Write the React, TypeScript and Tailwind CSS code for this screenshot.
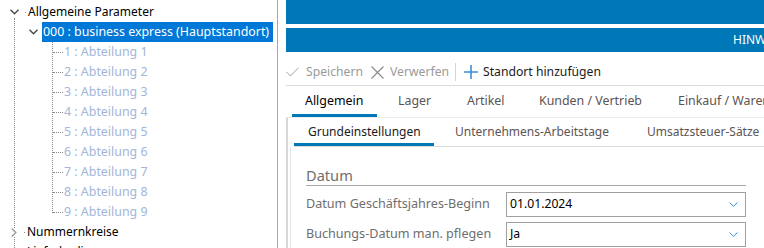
import React from "react";

const font = { fontFamily: '"Noto Sans", "Open Sans", sans-serif' };

const children = [1, 2, 3, 4, 5, 6, 7, 8, 9];

function ChevronDown({ className }: { className?: string }) {
  return (
    <svg width="9" height="6" viewBox="0 0 9 6" className={className}>
      <path d="M0.5 0.8 L4.5 4.8 L8.5 0.8" fill="none" stroke="currentColor" strokeWidth="1.4" />
    </svg>
  );
}

function ChevronRight({ className }: { className?: string }) {
  return (
    <svg width="6" height="9" viewBox="0 0 6 9" className={className}>
      <path d="M0.8 0.5 L4.8 4.5 L0.8 8.5" fill="none" stroke="currentColor" strokeWidth="1.4" />
    </svg>
  );
}

function Tree() {
  return (
    <div className="relative w-[278px] shrink-0 h-full border-r border-[#a8a8a8] bg-white text-[12px] leading-none">
      {/* tree guides */}
      <div className="absolute left-[14px] top-[18px] bottom-0 border-l border-dotted border-[#8a8a8a]" />
      <div className="absolute left-[52px] top-[42px] h-[171px] border-l border-dotted border-[#8a8a8a]" />

      <div className="relative pt-[2px]">
        <div className="flex items-center h-[20px]">
          <span className="w-[10px]" />
          <ChevronDown className="text-[#4a4a4a] bg-white relative" />
          <span className="ml-[6px] w-[1px] h-[1px] bg-[#8a8a8a]" />
          <span className="ml-[2px] text-black">Allgemeine Parameter</span>
        </div>
        <div className="flex items-center h-[20px]">
          <span className="w-[29px]" />
          <ChevronDown className="text-[#4a4a4a]" />
          <span className="ml-[4px] h-[20px] flex items-center bg-[#0078d7] text-white pl-[1px] pr-[4px] text-[12.4px]">
            000 : business express (Hauptstandort)
          </span>
        </div>
        {children.map((n) => (
          <div key={n} className="flex items-center h-[20px]">
            <span className="ml-[53px] w-[10px] border-t border-dotted border-[#8a8a8a]" />
            <span className="ml-[1px] text-[#a3b5d9] text-[12.4px]">
              {n} : Abteilung {n}
            </span>
          </div>
        ))}
        <div className="flex items-center h-[20px]">
          <span className="w-[11px]" />
          <ChevronRight className="text-[#9a9a9a] bg-white relative" />
          <span className="ml-[7px] w-[1px] h-[1px] bg-[#8a8a8a]" />
          <span className="ml-[2px] text-black">Nummernkreise</span>
        </div>
        <div className="flex items-center h-[20px]">
          <span className="w-[11px]" />
          <ChevronRight className="text-[#9a9a9a] bg-white relative" />
          <span className="ml-[7px] w-[1px] h-[1px] bg-[#8a8a8a]" />
          <span className="ml-[2px] text-black">Lieferbedingungen</span>
        </div>
      </div>
    </div>
  );
}

function Toolbar() {
  return (
    <div className="h-[34px] shrink-0 pt-[7px] flex items-center border-b border-[#dcdcdc] text-[12.2px]">
      <svg width="13" height="10" viewBox="0 0 13 10" className="text-[#a0a0a0]">
        <path d="M0.5 5 L4.5 9 L12.5 0.8" fill="none" stroke="currentColor" strokeWidth="1" />
      </svg>
      <span className="ml-[7px] w-[58px] text-[#9a9a9a]">Speichern</span>
      <svg width="13" height="13" viewBox="0 0 13 13" className="ml-[7px] text-[#8a8a8a]">
        <path d="M0.5 0.5 L12.5 12.5 M12.5 0.5 L0.5 12.5" fill="none" stroke="currentColor" strokeWidth="1.1" />
      </svg>
      <span className="ml-[6px] w-[60px] text-[#9a9a9a]">Verwerfen</span>
      <span className="ml-[5px] w-[1px] h-[18px] bg-[#d4d4d4]" />
      <svg width="14" height="14" viewBox="0 0 14 14" className="ml-[8px] text-[#3b8fd4]">
        <path d="M7 0 V14 M0 7 H14" fill="none" stroke="currentColor" strokeWidth="1.6" />
      </svg>
      <span className="ml-[5px] text-[#1a1a1a]">Standort hinzufügen</span>
    </div>
  );
}

function Tabs() {
  return (
    <div className="flex h-[31px] shrink-0 ml-[6px] text-[12.4px] whitespace-nowrap">
      <div className="w-[85px] mr-[8px] pl-[13px] flex items-center border-b-[3px] border-[#0077b6] text-black pt-[3px]">
        Allgemein
      </div>
      <div className="w-[69px] pl-[13px] flex items-center text-[#5c5454]">Lager</div>
      <div className="w-[72px] pl-[13px] flex items-center text-[#5c5454]">Artikel</div>
      <div className="w-[139px] pl-[13px] flex items-center text-[#5c5454]">Kunden / Vertrieb</div>
      <div className="pl-[13px] flex items-center text-[#5c5454]">Einkauf / Warenwirtschaft</div>
    </div>
  );
}

function SelectBox({ value }: { value: string }) {
  return (
    <div className="w-[240px] h-[25px] border border-[#a0a0a0] flex items-center pl-[3px] pr-[7px] text-[12.2px] text-black">
      <span className="flex-1">{value}</span>
      <svg width="9" height="5" viewBox="0 0 9 5" className="text-[#3d8fd4]">
        <path d="M0.5 0.5 L4.5 4.3 L8.5 0.5" fill="none" stroke="currentColor" strokeWidth="1" />
      </svg>
    </div>
  );
}

function Panel() {
  return (
    <div className="flex-1 shrink-0 border-l-2 border-t border-l-[#d8d8d8] border-t-[#ececec] pl-[6px]">
      <div className="flex h-[29px] text-[12px] whitespace-nowrap border-b border-[#dcdcdc]">
        <div className="w-[140px] pl-[14px] flex items-center border-b-[3px] border-[#0077b6] text-[#1a1a1a] pt-[2px]">
          Grundeinstellungen
        </div>
        <div className="w-[199px] pl-[21px] flex items-center text-[#5c5454]">Unternehmens-Arbeitstage</div>
        <div className="pl-[14px] flex items-center text-[#5c5454]">Umsatzsteuer-Sätze</div>
      </div>
      <div className="border-l border-[#e4e4e4] ml-[-4px] h-[120px] pl-[15px] pt-[18px]">
        <div className="w-[440px] border-b border-[#a8a8a8] text-[14.6px] text-[#6e6e6e] leading-[20px]">
          Datum
        </div>
        <div className="flex items-center mt-[6px] w-[440px]">
          <span className="w-[200px] text-[12.6px] text-[#6e6e6e]">Datum Geschäftsjahres-Beginn</span>
          <SelectBox value="01.01.2024" />
        </div>
        <div className="flex items-center mt-[5px] w-[440px]">
          <span className="w-[200px] text-[12.6px] text-[#6e6e6e]">Buchungs-Datum man. pflegen</span>
          <SelectBox value="Ja" />
        </div>
      </div>
    </div>
  );
}

export default function App() {
  return (
    <div className="w-[764px] h-[248px] overflow-hidden flex bg-white" style={font}>
      <Tree />
      <div className="ml-[8px] w-[560px] shrink-0 flex flex-col">
        <div className="h-[24px] shrink-0 bg-[#0077b6]" />
        <div className="mt-[4px] h-[24px] shrink-0 bg-[#0077b6] flex items-center pl-[447px] text-[12px] text-white whitespace-nowrap">
          HINWEISE
        </div>
        <Toolbar />
        <Tabs />
        <Panel />
      </div>
    </div>
  );
}
